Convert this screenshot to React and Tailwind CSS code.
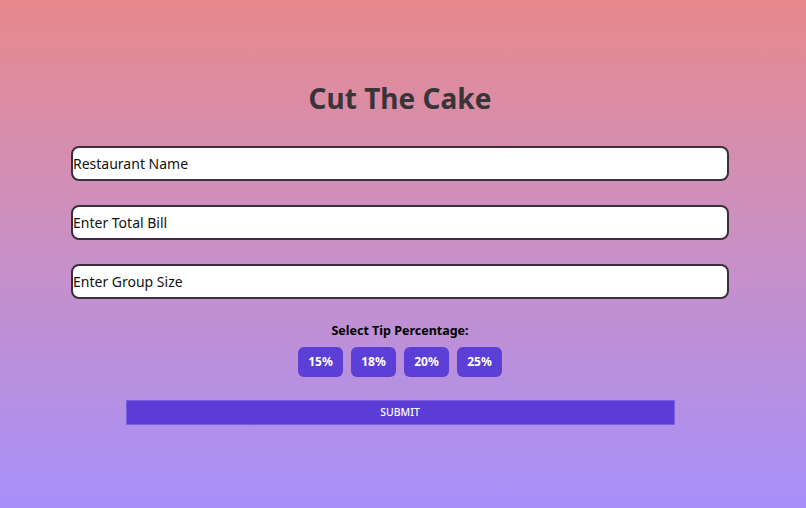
import React from "react";

const tips = ["15%", "18%", "20%", "25%"];

const App = () => {
  return (
    <div className="min-h-[508px] w-full bg-gradient-to-b from-[#e8898c] to-[#a78ffa] font-['Noto_Sans',sans-serif]">
      <div className="w-[800px] flex flex-col items-center pt-[80px]">
        <h1 className="text-[28px] leading-[36px] font-bold text-[#383438]">Cut The Cake</h1>
        <div className="w-[658px] flex flex-col gap-[24px] mt-[30px]">
          <input
            className="h-[35px] w-full bg-white border-2 border-[#3a2f3a] rounded-[8px] px-0 text-[14px] outline-none placeholder:text-[#111]"
            placeholder="Restaurant Name"
          />
          <input
            className="h-[35px] w-full bg-white border-2 border-[#3a2f3a] rounded-[8px] px-0 text-[14px] outline-none placeholder:text-[#111]"
            placeholder="Enter Total Bill"
          />
          <input
            className="h-[35px] w-full bg-white border-2 border-[#3a2f3a] rounded-[8px] px-0 text-[14px] outline-none placeholder:text-[#111]"
            placeholder="Enter Group Size"
          />
        </div>
        <p className="mt-[22px] text-[12.5px] leading-[20px] font-bold text-black">Select Tip Percentage:</p>
        <div className="flex gap-[8px] mt-[6px]">
          {tips.map((t) => (
            <button
              key={t}
              className="w-[45px] h-[30px] rounded-[6px] bg-[#5b3fd6] text-white text-[12px] font-bold"
            >
              {t}
            </button>
          ))}
        </div>
        <button className="mt-[23px] w-[549px] h-[25px] bg-[#5b3cd4] border border-[#7a5ee0] text-white text-[10.5px] font-medium">
          SUBMIT
        </button>
      </div>
    </div>
  );
};

export default App;
